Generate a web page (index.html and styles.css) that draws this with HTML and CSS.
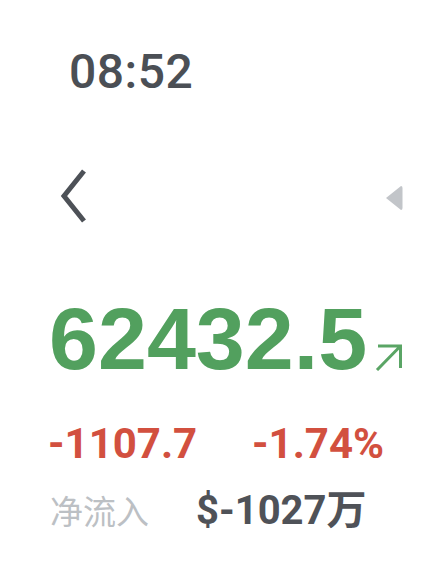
FILE: index.html
```html
<!DOCTYPE html>
<html lang="zh">
<head>
<meta charset="utf-8">
<link rel="stylesheet" href="styles.css">
</head>
<body>
<div class="screen">
  <div class="time">08:52</div>
  <div class="nav">
    <svg class="back" width="30" height="60" viewBox="0 0 30 60"><path d="M26 5 L6 30 L26 55" fill="none" stroke="#4d5157" stroke-width="5" stroke-linejoin="miter"/></svg>
    <svg class="tri" width="18" height="26" viewBox="0 0 18 26"><path d="M16 1 Q17.5 1 17.5 3 L17.5 23 Q17.5 25 16 25 L1 13 Z" fill="#c2c5c9"/></svg>
  </div>
  <div class="price-row">
    <span class="price">62432.5</span>
    <svg class="arrow" width="28" height="28" viewBox="0 0 28 28"><path d="M2 27 L25.5 3 M3 3 L25.5 3 L25.5 25" fill="none" stroke="#5aa565" stroke-width="3"/></svg>
  </div>
  <div class="change-row">
    <span class="chg">-1107.7</span>
    <span class="pct">-1.74%</span>
  </div>
  <div class="flow-row">
    <span class="flow-label">净流入</span>
    <span class="flow-val">$-1027万</span>
  </div>
</div>
</body>
</html>
```
FILE: styles.css
```css
html, body {
  margin: 0;
  padding: 0;
  background: #ffffff;
}
.screen {
  width: 439px;
  height: 565px;
  position: relative;
  overflow: hidden;
  font-family: Roboto, "Noto Sans CJK SC", sans-serif;
}
.time {
  padding: 44px 0 0 69px;
  font-size: 48px;
  font-weight: 500;
  line-height: 56px;
  color: #4b4f55;
  letter-spacing: 0.5px;
}
.nav {
  display: flex;
  justify-content: space-between;
  align-items: center;
  margin-top: 66px;
  padding: 0 36px 0 58px;
  height: 60px;
}
.back { display: block; }
.tri { display: block; margin-top: 4px; }
.price-row {
  display: flex;
  align-items: flex-end;
  margin-top: 73px;
  padding-left: 49px;
  height: 80px;
}
.price {
  font-family: "Liberation Sans", Arial, sans-serif;
  font-weight: 700;
  font-size: 88px;
  line-height: 80px;
  color: #52a05e;
}
.arrow {
  display: block;
  margin: 0 0 8px 8px;
}
.change-row {
  display: flex;
  margin-top: 41px;
  padding-left: 48px;
  font-size: 42px;
  font-weight: 700;
  line-height: 48px;
  color: #d2503f;
}
.chg { width: 204px; }
.flow-row {
  display: flex;
  align-items: baseline;
  margin-top: 18px;
  padding-left: 50px;
  line-height: 48px;
}
.flow-label {
  font-family: "Noto Sans CJK SC", sans-serif;
  font-size: 33px;
  color: #bcc0c4;
  width: 146px;
}
.flow-val {
  font-size: 40px;
  font-weight: 700;
  color: #4f5258;
}
```
